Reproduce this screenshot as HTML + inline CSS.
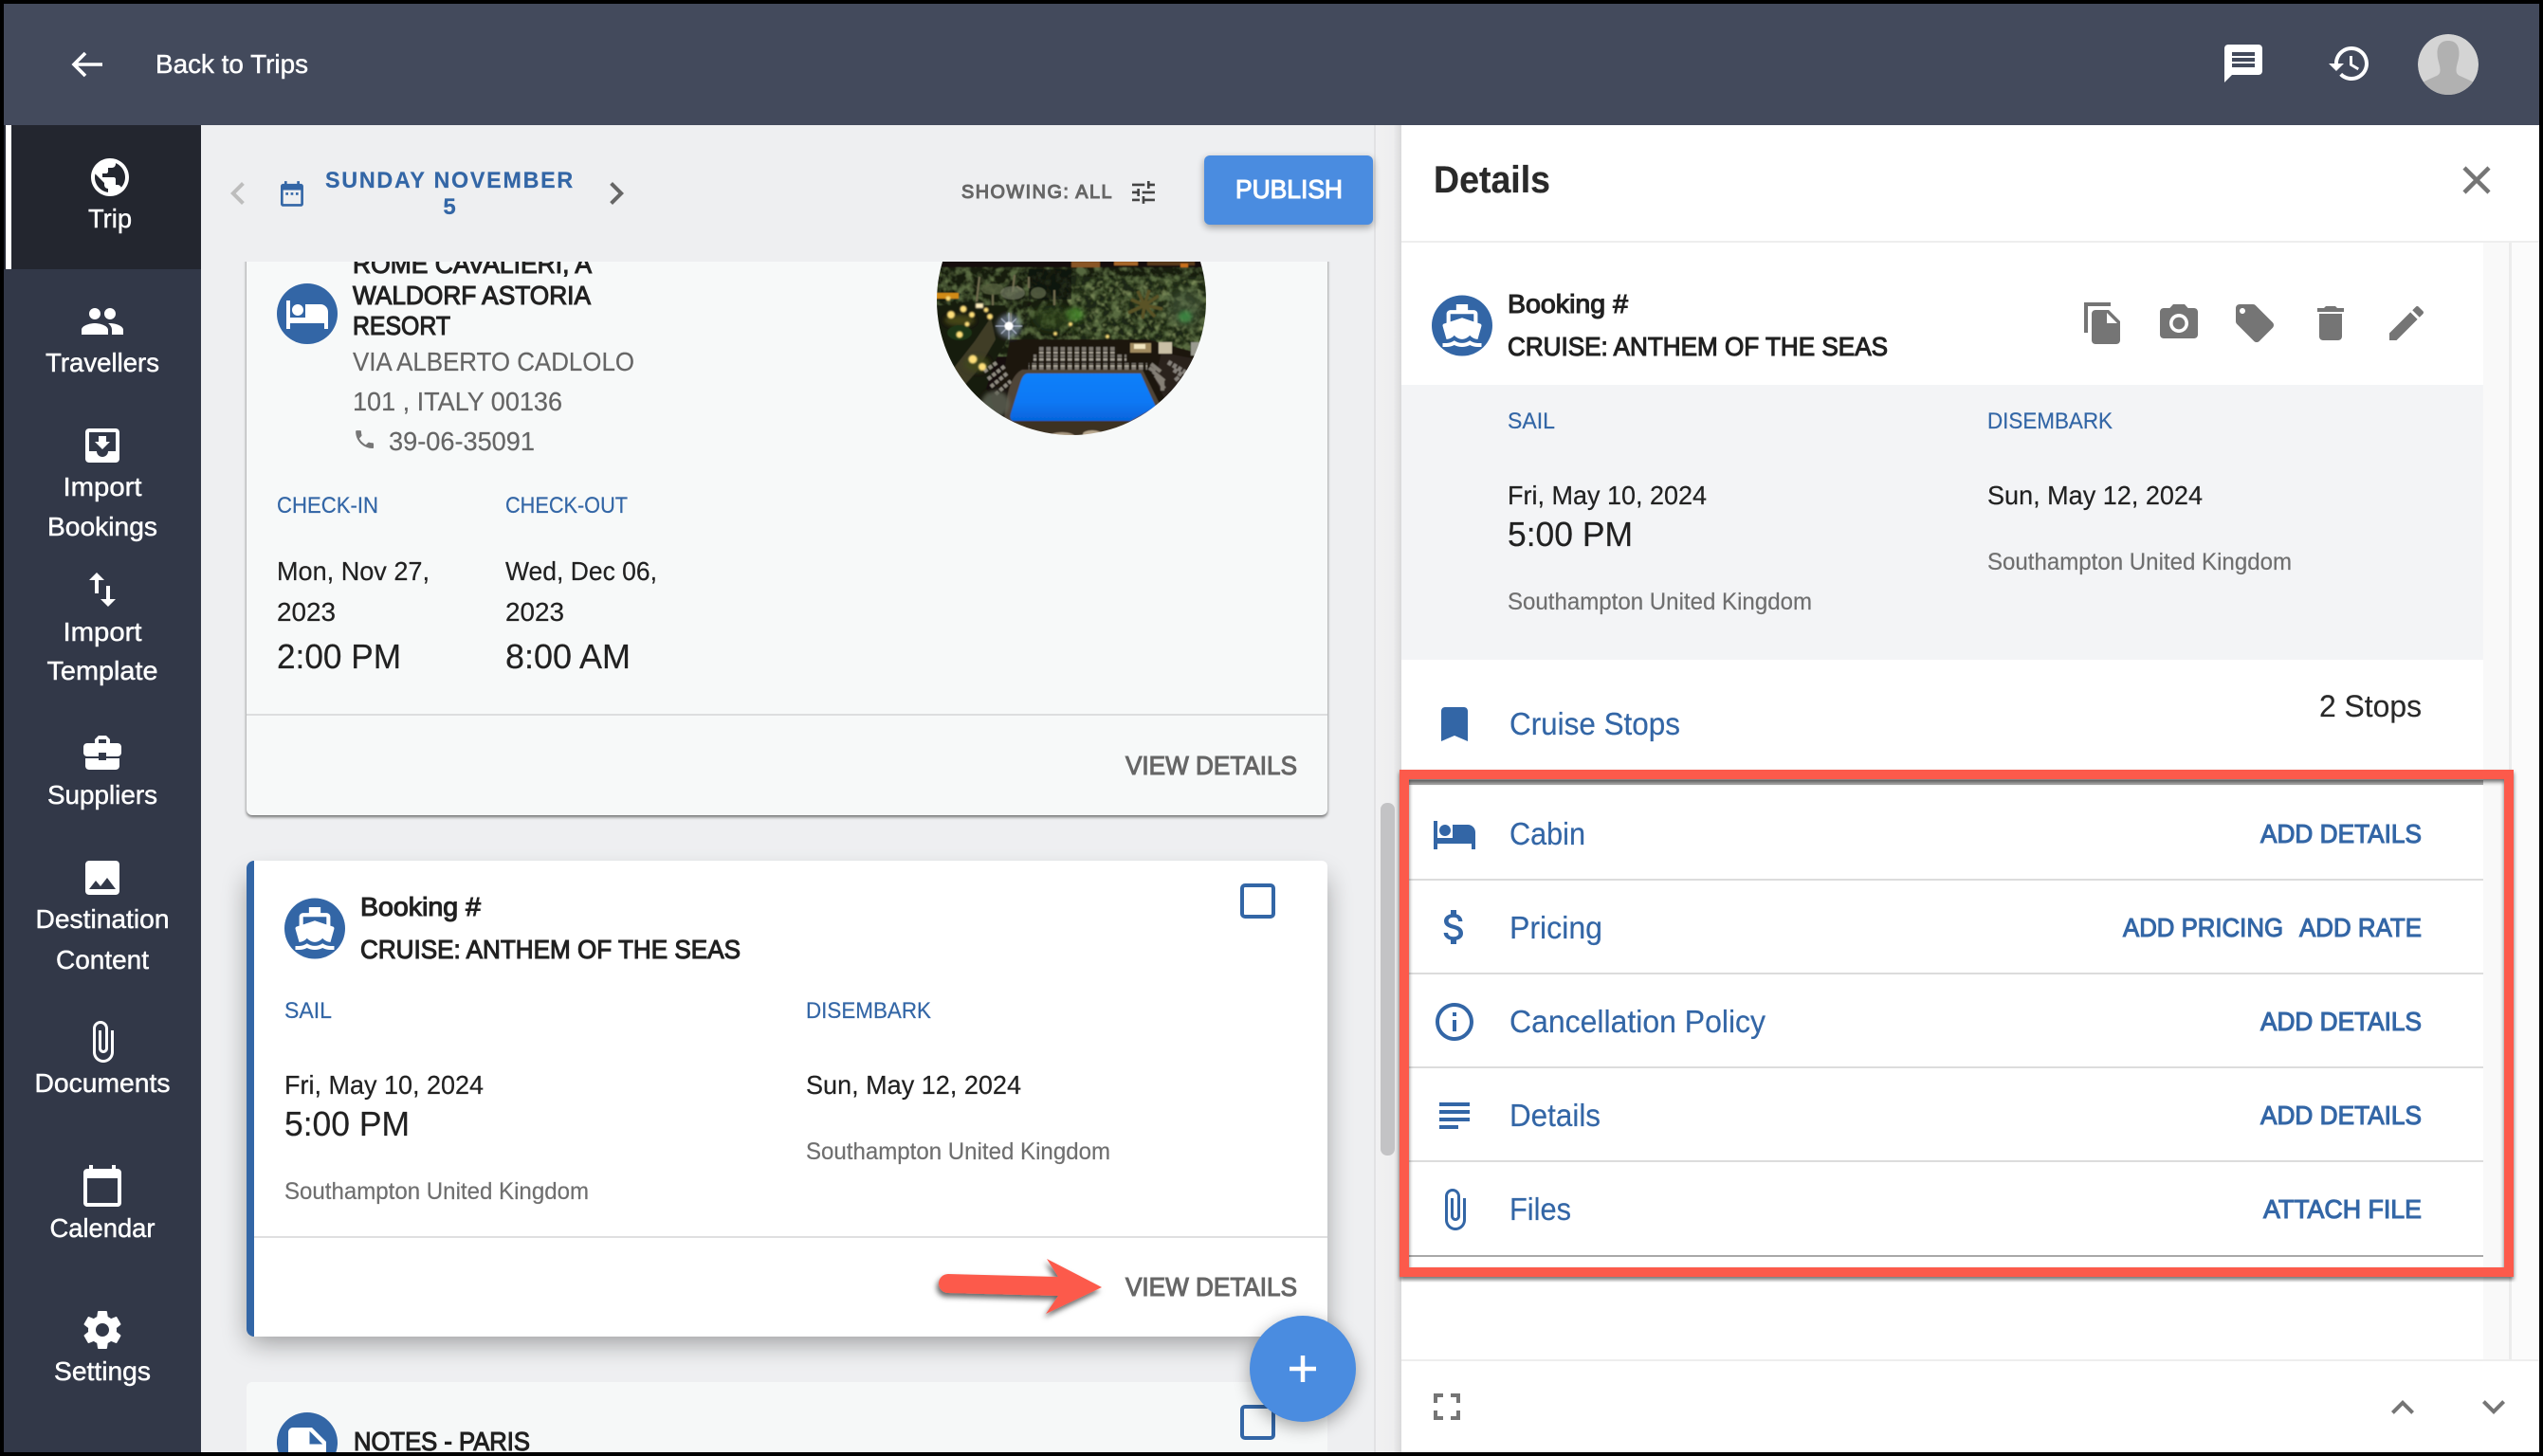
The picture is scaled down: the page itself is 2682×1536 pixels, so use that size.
<!DOCTYPE html>
<html lang="en"><head><meta charset="utf-8"><title>Trip details</title>
<style>
html,body{margin:0;padding:0;background:#000}
svg{display:block}
text{font-family:"Liberation Sans",Arial,sans-serif;fill:currentColor;white-space:pre;stroke:currentColor;stroke-width:.2px}
.k{color:#212121}.b{color:#3366a6}.g{color:#666}.w{color:#fff}.d{color:#2a2a2a}.h{color:#6f6f6f}
text.m{stroke-width:1.1px}
.nav text{stroke-width:.45px}
.s24{font-size:24px}.s25{font-size:25px}.s28{font-size:28px}.s33{font-size:33px}.s36{font-size:36px}
</style></head><body>
<svg xmlns="http://www.w3.org/2000/svg" width="2682" height="1536" viewBox="0 0 2682 1536">
<defs>
<path id="clip" d="M16.5 6v11.5c0 2.21-1.79 4-4 4s-4-1.79-4-4V5c0-1.38 1.12-2.5 2.5-2.5s2.5 1.12 2.5 2.5v10.5c0 .55-.45 1-1 1s-1-.45-1-1V6H10v9.5c0 1.38 1.12 2.5 2.5 2.5s2.5-1.12 2.5-2.5V5c0-2.21-1.79-4-4-4S7 2.79 7 5v12.5c0 3.04 2.46 5.5 5.5 5.5s5.5-2.46 5.5-5.5V6h-1.5z"/>
<path id="hotel" d="M7 13c1.66 0 3-1.34 3-3S8.66 7 7 7s-3 1.34-3 3 1.34 3 3 3zm12-6h-8v7H3V5H1v15h2v-3h18v3h2v-9c0-2.21-1.79-4-4-4z"/>
<path id="boat" d="M20 21c-1.39 0-2.78-.47-4-1.32-2.44 1.71-5.56 1.71-8 0C6.78 20.53 5.39 21 4 21H2v2h2c1.38 0 2.74-.35 4-.99 2.52 1.29 5.48 1.29 8 0 1.26.65 2.62.99 4 .99h2v-2h-2zM3.95 19H4c1.6 0 3.02-.88 4-2 .98 1.12 2.4 2 4 2s3.02-.88 4-2c.98 1.12 2.4 2 4 2h.05l1.89-6.68c.08-.26.06-.54-.06-.78s-.34-.42-.6-.5L20 10.62V6c0-1.1-.9-2-2-2h-3V1H9v3H6c-1.1 0-2 .9-2 2v4.62l-1.29.42c-.26.08-.48.26-.6.5s-.15.52-.06.78L3.95 19zM6 6h12v3.97L12 8 6 9.97V6z"/>
<filter id="cardsh" x="-10%" y="-20%" width="120%" height="150%"><feGaussianBlur stdDeviation="14"/></filter>
<filter id="smsh" x="-10%" y="-20%" width="120%" height="150%"><feGaussianBlur stdDeviation="4"/></filter>
<filter id="tinysh" x="-5%" y="-5%" width="110%" height="110%"><feGaussianBlur stdDeviation="1.500"/></filter>
<filter id="fabsh" x="-50%" y="-50%" width="200%" height="200%"><feGaussianBlur stdDeviation="9"/></filter>
<filter id="arrsh" x="-10%" y="-30%" width="120%" height="170%"><feDropShadow dx="-2" dy="4" stdDeviation="3" flood-color="#000" flood-opacity=".6"/></filter>
<filter id="redsh" x="-2%" y="-2%" width="104%" height="104%"><feDropShadow dx="0" dy="3" stdDeviation="2" flood-color="#000" flood-opacity=".55"/></filter>
<filter id="bl5"><feGaussianBlur stdDeviation="5"/></filter>
<filter id="bl2" x="-50%" y="-50%" width="200%" height="200%"><feGaussianBlur stdDeviation="2"/></filter>
<filter id="bl1" x="-50%" y="-50%" width="200%" height="200%"><feGaussianBlur stdDeviation=".8"/></filter>
<filter id="soft" x="0" y="0" width="100%" height="100%"><feGaussianBlur stdDeviation=".6"/></filter>
<filter id="leaf" x="0" y="0" width="100%" height="100%"><feTurbulence type="fractalNoise" baseFrequency=".11" numOctaves="3" seed="7"/><feColorMatrix values="0 0 0 0 .15  0 0 0 0 .22  0 0 0 0 .08  3.400 0 0 0 -1.400"/></filter>
<filter id="leaf2" x="0" y="0" width="100%" height="100%"><feTurbulence type="fractalNoise" baseFrequency=".16" numOctaves="2" seed="21"/><feColorMatrix values="0 0 0 0 .24  0 0 0 0 .30  0 0 0 0 .12  4 0 0 0 -2.100"/></filter>
<clipPath id="mainclip"><rect x="212" y="276" width="1237" height="1256"/></clipPath>
<clipPath id="poolc"><circle cx="1130" cy="317" r="142"/></clipPath>
<clipPath id="avc"><circle cx="2582" cy="68" r="32"/></clipPath>
<pattern id="chairs" width="7.500" height="7" patternUnits="userSpaceOnUse"><rect x="1" y="0" width="4.500" height="6" fill="#7c776e"/><rect x="1" y="0" width="4.500" height="2" fill="#a8a294"/></pattern>
<linearGradient id="side" x1="0" x2="1" y1="0" y2="0"><stop offset="0" stop-color="#f1f1f2"/><stop offset=".7" stop-color="#eeeeef"/><stop offset="1" stop-color="#d9d9da"/></linearGradient>
<linearGradient id="poolg" x1="0" x2="0" y1="0" y2="1"><stop offset="0" stop-color="#0a80fa"/><stop offset=".6" stop-color="#0a78f4"/><stop offset="1" stop-color="#0664dc"/></linearGradient>
</defs>

<rect width="2682" height="1536" fill="#000"/>
<rect x="212" y="132" width="1240" height="1400" fill="#eeeff1"/>
<rect x="1449" y="132" width="29" height="1400" fill="url(#side)"/>
<rect x="1449" y="132" width="2" height="1400" fill="#e2e2e4"/>
<rect x="1456" y="847" width="15" height="372" rx="7" fill="#c3c3c5"/>

<!-- cards -->
<g clip-path="url(#mainclip)">
  <rect x="260" y="270" width="1140" height="592" rx="6" fill="#000" opacity=".55" filter="url(#tinysh)"/>
  <rect x="260" y="270" width="1140" height="590" rx="6" fill="#f7f9f9"/>
  <rect x="260" y="753" width="1140" height="2" fill="#dddedf"/>
  <rect x="262" y="926" width="1136" height="490" rx="6" fill="#000" opacity=".36" filter="url(#cardsh)"/>
  <rect x="260" y="908" width="1140" height="502" rx="8" fill="#3366a6"/>
  <path d="M268 908H1394a6 6 0 0 1 6 6V1404a6 6 0 0 1-6 6H268z" fill="#fff"/>
  <rect x="268" y="1304" width="1132" height="2" fill="#dfdfe0"/>
  <rect x="260" y="1458" width="1140" height="90" rx="6" fill="#f6f8f8"/>
</g>

<!-- Card 1 content -->
<g clip-path="url(#mainclip)">
  <circle cx="324" cy="331" r="32" fill="#3366a6"/>
  <use href="#hotel" transform="translate(300 307) scale(2)" fill="#fff"/>
  <text x="372" y="288" class="s28 k m" textLength="252" lengthAdjust="spacingAndGlyphs">ROME CAVALIERI, A</text>
  <text x="372" y="321" class="s28 k m" textLength="251" lengthAdjust="spacingAndGlyphs">WALDORF ASTORIA</text>
  <text x="372" y="353" class="s28 k m" textLength="103" lengthAdjust="spacingAndGlyphs">RESORT</text>
  <text x="372" y="391" class="s28 g" textLength="297" lengthAdjust="spacingAndGlyphs">VIA ALBERTO CADLOLO</text>
  <text x="372" y="433" class="s28 g" textLength="221" lengthAdjust="spacingAndGlyphs">101 , ITALY 00136</text>
  <path transform="translate(372 451) scale(1.05)" fill="#777" d="M6.62 10.79c1.44 2.83 3.76 5.14 6.59 6.59l2.2-2.2c.27-.27.67-.36 1.02-.24 1.12.37 2.33.57 3.57.57.55 0 1 .45 1 1V20c0 .55-.45 1-1 1-9.39 0-17-7.61-17-17 0-.55.45-1 1-1h3.5c.55 0 1 .45 1 1 0 1.25.2 2.45.57 3.57.11.35.03.74-.25 1.02l-2.2 2.2z"/>
  <text x="410" y="475" class="s28 g" textLength="154" lengthAdjust="spacingAndGlyphs">39-06-35091</text>
  <text x="292" y="541" class="s24 b" textLength="107" lengthAdjust="spacingAndGlyphs">CHECK-IN</text>
  <text x="533" y="541" class="s24 b" textLength="129" lengthAdjust="spacingAndGlyphs">CHECK-OUT</text>
  <text x="292" y="612" class="s28 k" textLength="161" lengthAdjust="spacingAndGlyphs">Mon, Nov 27,</text>
  <text x="292" y="655" class="s28 k" textLength="62" lengthAdjust="spacingAndGlyphs">2023</text>
  <text x="533" y="612" class="s28 k" textLength="160" lengthAdjust="spacingAndGlyphs">Wed, Dec 06,</text>
  <text x="533" y="655" class="s28 k" textLength="62" lengthAdjust="spacingAndGlyphs">2023</text>
  <text x="292" y="705" class="s36 k" textLength="131" lengthAdjust="spacingAndGlyphs">2:00 PM</text>
  <text x="533" y="705" class="s36 k" textLength="132" lengthAdjust="spacingAndGlyphs">8:00 AM</text>
  <text x="1187" y="817" class="s28 g m" textLength="181" lengthAdjust="spacingAndGlyphs">VIEW DETAILS</text>

  <!-- pool image -->
  <g clip-path="url(#poolc)">
   <g filter="url(#soft)">
    <rect x="985" y="170" width="292" height="292" fill="#120f0a"/>
    <!-- city lights on top -->
    <rect x="1130" y="276" width="30" height="13" fill="#8a5626"/>
    <rect x="1175" y="276" width="25" height="4" fill="#a8682a"/>
    <rect x="1210" y="276" width="50" height="4" fill="#5a3a1c"/>
    <rect x="1245" y="278" width="8" height="4" fill="#c8701c"/>
    <!-- foliage -->
    <rect x="985" y="282" width="292" height="94" fill="#141a0c"/>
    <rect x="1130" y="292" width="150" height="80" fill="#1d2812"/>
    <rect x="985" y="282" width="292" height="94" filter="url(#leaf)" opacity=".75"/>
    <rect x="1125" y="296" width="155" height="74" filter="url(#leaf2)" opacity=".7"/>
    <rect x="985" y="282" width="80" height="28" filter="url(#leaf2)" opacity=".3"/>
    <rect x="1085" y="284" width="45" height="32" fill="#0c0f08" opacity=".7"/>
    <ellipse cx="1250" cy="325" rx="19" ry="20" fill="#4a5c40" opacity=".55" filter="url(#bl5)"/>
    <ellipse cx="1250" cy="334" rx="7" ry="6" fill="#3c9a4a" opacity=".7" filter="url(#bl2)"/>
    <ellipse cx="1133" cy="332" rx="10" ry="7" fill="#4d9a30" opacity=".7" filter="url(#bl2)"/>
    <ellipse cx="1110" cy="336" rx="22" ry="14" fill="#33491f" opacity=".6" filter="url(#bl5)"/>
    <!-- palm -->
    <path d="M1207 322L1190 330M1207 322L1193 316M1207 322L1200 307M1207 322L1212 306M1207 322L1222 312M1207 322L1226 326M1207 322L1218 334M1207 322L1205 336" stroke="#5a5228" stroke-width="3.500" fill="none"/>
    <!-- trunks / left palms -->
    <path d="M1047 310V330M1033 292L1030 318M1070 290L1068 308M1085 292V304M1112 306V322M1066 330V344M1078 306L1072 302" stroke="#6e6a4e" stroke-width="2.200" fill="none"/>
    <ellipse cx="1047" cy="305" rx="12" ry="6" fill="#56603e" opacity=".8"/>
    <ellipse cx="1068" cy="309" rx="13" ry="7" fill="#737a62" opacity=".7"/>
    <ellipse cx="1095" cy="309" rx="8" ry="6" fill="#666f50" opacity=".7"/>
    <!-- left garden & path -->
    <path d="M985 322L1060 322 1065 352 1050 380 1040 410 1070 450 985 470Z" fill="#181a0e"/>
    <path d="M1045 335L1028 360 1006 388 1016 408 1030 392 1050 358Z" fill="#4a452f" opacity=".8"/>
    <ellipse cx="1012" cy="338" rx="16" ry="6" fill="#50501c" opacity=".8" filter="url(#bl2)"/>
    <ellipse cx="1012" cy="351" rx="13" ry="8" fill="#1a3412"/>
    <ellipse cx="1030" cy="384" rx="14" ry="9" fill="#40461c" opacity=".8" filter="url(#bl2)"/>
    <rect x="985" y="309" width="26" height="6" fill="#d08a18"/>
    <!-- deck -->
    <path d="M1065 358L1210 358 1262 372 1282 392 1282 470 1130 470 1060 470 1045 420 1060 385Z" fill="#1b1611"/>
    <path d="M1225 372L1258 378 1272 396 1232 428 1218 400Z" fill="#2c221a"/>
    <!-- chairs -->
    <rect x="1093" y="366" width="84" height="7" fill="url(#chairs)"/>
    <rect x="1090" y="374" width="98" height="7" fill="url(#chairs)"/>
    <rect x="1085" y="383" width="125" height="7" fill="url(#chairs)"/>
    <path d="M1042 400L1060 386M1045 408L1062 394M1050 416L1066 402M1038 392L1052 382" stroke="#8f8a80" stroke-width="4" fill="none" stroke-dasharray="4 2"/>
    <path d="M1212 388L1218 392M1218 396L1224 400M1214 384L1224 392M1216 392L1228 402M1220 398L1228 410M1226 402L1226 412" stroke="#8f8a80" stroke-width="4" fill="none" opacity=".9"/>
    <path d="M1232 382L1252 394M1238 390L1256 402M1240 398L1250 410" stroke="#85807a" stroke-width="5" fill="none" stroke-dasharray="4 2"/>
    <!-- cabanas -->
    <rect x="1192" y="362" width="22" height="10" fill="#a08a5e"/>
    <rect x="1196" y="363" width="12" height="5" fill="#f2e6c0"/>
    <rect x="1222" y="361" width="14" height="12" fill="#c9c0a6"/>
    <rect x="1256" y="361" width="10" height="14" fill="#9a9a90"/>
    <!-- pool -->
    <path d="M1078 390H1205L1224 428 1224 450H1058L1062 420Q1066 396 1078 390Z" fill="#4f4439"/>
    <path d="M1084 394H1203L1219 429 1192 444H1070Q1064 444 1066 436L1076 404Q1079 394 1084 394Z" fill="url(#poolg)"/>
    <rect x="1040" y="444" width="190" height="22" fill="#3e3024"/>
    <ellipse cx="1050" cy="426" rx="15" ry="14" fill="#5e6454" opacity=".8" filter="url(#bl2)"/>
    <ellipse cx="1120" cy="461" rx="14" ry="5" fill="#a89880"/>
    <ellipse cx="1152" cy="458" rx="10" ry="4" fill="#b8a890"/>
    <!-- lights -->
    <g filter="url(#bl1)" fill="#ffe07a">
      <rect x="1029" y="320" width="8" height="5" fill="#fff0c0"/>
      <circle cx="1016" cy="326" r="3.500"/><circle cx="1003" cy="332" r="4"/><circle cx="1025" cy="332" r="3"/>
      <circle cx="1020" cy="342" r="2.500"/><circle cx="1044" cy="334" r="3"/><circle cx="1040" cy="327" r="2.500"/>
      <circle cx="1012" cy="353" r="3.500"/><circle cx="1026" cy="379" r="4.500"/><circle cx="1036" cy="387" r="4"/>
      <circle cx="1113" cy="352" r="2"/><circle cx="1129" cy="342" r="2"/><circle cx="1168" cy="355" r="2"/>
      <circle cx="1000" cy="315" r="2.500"/>
    </g>
    <circle cx="1064" cy="344" r="13" fill="#bcd2ff" opacity=".4" filter="url(#bl2)"/>
    <path d="M1064 330V358M1050 344H1078M1056 336L1072 352M1072 336L1056 352" stroke="#dfe8ff" stroke-width="1" opacity=".7"/>
    <circle cx="1064" cy="344" r="4.500" fill="#fff"/>
   </g>
  </g>

  <!-- Card 2 content -->
  <circle cx="332" cy="979.500" r="32" fill="#3366a6"/>
  <use href="#boat" transform="translate(307.400 954.900) scale(2.05)" fill="#fff"/>
  <text x="380" y="966" class="s28 k m" textLength="127" lengthAdjust="spacingAndGlyphs">Booking #</text>
  <text x="380" y="1011" class="s28 k m" textLength="401" lengthAdjust="spacingAndGlyphs">CRUISE: ANTHEM OF THE SEAS</text>
  <rect x="1310" y="934" width="33" height="33" rx="3" fill="none" stroke="#3366a6" stroke-width="4"/>
  <text x="300" y="1074" class="s24 b" textLength="50" lengthAdjust="spacingAndGlyphs">SAIL</text>
  <text x="850" y="1074" class="s24 b" textLength="132" lengthAdjust="spacingAndGlyphs">DISEMBARK</text>
  <text x="300" y="1154" class="s28 k" textLength="210" lengthAdjust="spacingAndGlyphs">Fri, May 10, 2024</text>
  <text x="300" y="1198" class="s36 k" textLength="132" lengthAdjust="spacingAndGlyphs">5:00 PM</text>
  <text x="300" y="1265" class="s25 h" textLength="321" lengthAdjust="spacingAndGlyphs">Southampton United Kingdom</text>
  <text x="850" y="1154" class="s28 k" textLength="227" lengthAdjust="spacingAndGlyphs">Sun, May 12, 2024</text>
  <text x="850" y="1223" class="s25 h" textLength="321" lengthAdjust="spacingAndGlyphs">Southampton United Kingdom</text>
  <text x="1187" y="1367" class="s28 g m" textLength="181" lengthAdjust="spacingAndGlyphs">VIEW DETAILS</text>
  <path d="M1000 1344L1116 1347 1104 1328 1162 1358 1103 1386 1116 1367 1000 1364a10 10 0 0 1 0-20Z" fill="#fc5a4b" filter="url(#arrsh)"/>

  <!-- Card 3 content -->
  <circle cx="324" cy="1522" r="32" fill="#3366a6"/>
  <path transform="translate(294 1501) scale(2.5)" fill="#fff" d="M6 2c-1.1 0-1.99.9-1.99 2L4 20c0 1.1.89 2 1.99 2H18c1.1 0 2-.9 2-2V8l-6-6H6zm7 7V3.5L18.5 9H13z"/>
  <text x="373" y="1530" class="s28 k m" textLength="186" lengthAdjust="spacingAndGlyphs">NOTES - PARIS</text>
  <rect x="1310" y="1484" width="33" height="33" rx="3" fill="none" stroke="#3366a6" stroke-width="4"/>
</g>

<!-- toolbar -->
<path transform="translate(227 180) scale(2)" fill="#bdbdbd" d="M15.41 7.41L14 6l-6 6 6 6 1.41-1.41L10.83 12z"/>
<path transform="translate(292 188.5) scale(1.33)" fill="#3366a6" d="M9 11H7v2h2v-2zm4 0h-2v2h2v-2zm4 0h-2v2h2v-2zm2-7h-1V2h-2v2H8V2H6v2H5c-1.11 0-1.99.9-1.99 2L3 20c0 1.1.89 2 2 2h14c1.1 0 2-.9 2-2V6c0-1.1-.9-2-2-2h-3.170z M19 20H5V9h14v11z" style="display:none"/>
<path transform="translate(292 188.5) scale(1.33)" fill="#3366a6" d="M9 11H7v2h2v-2zm4 0h-2v2h2v-2zm4 0h-2v2h2v-2zm2-7h-1V2h-2v2H8V2H6v2H5c-1.11 0-1.99.9-1.99 2L3 20c0 1.1.89 2 2 2h14c1.1 0 2-.9 2-2V6c0-1.1-.9-2-2-2zm0 16H5V9h14v11z"/>
<text x="343" y="198" class="s24 b" font-weight="700" letter-spacing="1.800" textLength="263" lengthAdjust="spacingAndGlyphs">SUNDAY NOVEMBER</text>
<text x="474" y="226" class="s24 b" font-weight="700" text-anchor="middle">5</text>
<path transform="translate(626 180) scale(2)" fill="#666" d="M10 6L8.59 7.41 13.17 12l-4.58 4.59L10 18l6-6z"/>
<text x="1014" y="209" font-size="20" class="g m" letter-spacing="1.500" textLength="160" lengthAdjust="spacingAndGlyphs">SHOWING: ALL</text>
<path transform="translate(1190 187) scale(1.33)" fill="#444" d="M3 17v2h6v-2H3zM3 5v2h10V5H3zm10 16v-2h8v-2h-8v-2h-2v6h2zM7 9v2H3v2h4v2h2V9H7zm14 4v-2H11v2h10zm-6-4h2V7h4V5h-4V3h-2v6z"/>
<rect x="1270" y="167" width="178" height="73" rx="6" fill="#000" opacity=".35" filter="url(#smsh)"/>
<rect x="1270" y="164" width="178" height="73" rx="6" fill="#4a8ce0"/>
<text x="1303" y="209" class="s28 w m" textLength="113" lengthAdjust="spacingAndGlyphs">PUBLISH</text>

<!-- FAB -->
<circle cx="1374" cy="1449" r="56" fill="#000" opacity=".35" filter="url(#fabsh)"/>
<circle cx="1374" cy="1444" r="56" fill="#4a8ce0"/>
<path d="M1360 1444h28M1374 1430v28" stroke="#fff" stroke-width="4.5" fill="none"/>

<!-- header -->
<rect x="4" y="4" width="2674" height="128" fill="#434a5c"/>
<path d="M108 68H78M90 56L78 68 90 80" fill="none" stroke="#fff" stroke-width="3.6"/>
<text x="164" y="77" class="s28 w" style="stroke-width:.45px" textLength="161" lengthAdjust="spacingAndGlyphs">Back to Trips</text>
<path transform="translate(2342 43) scale(2)" fill="#fff" d="M20 2H4c-1.1 0-1.99.9-1.99 2L2 22l4-4h14c1.1 0 2-.9 2-2V4c0-1.1-.9-2-2-2zm-2 12H6v-2h12v2zm0-3H6V9h12v2zm0-3H6V6h12v2z"/>
<path transform="translate(2454 43) scale(2)" fill="#fff" d="M13 3c-4.97 0-9 4.03-9 9H1l3.89 3.89.07.14L9 12H6c0-3.87 3.13-7 7-7s7 3.13 7 7-3.13 7-7 7c-1.93 0-3.68-.79-4.94-2.06l-1.42 1.42C8.27 19.99 10.51 21 13 21c4.97 0 9-4.03 9-9s-4.03-9-9-9zm-1 5v5l4.28 2.54.72-1.21-3.5-2.08V8H12z"/>
<g clip-path="url(#avc)">
  <circle cx="2582" cy="68" r="32" fill="#d4d4d4"/>
  <path d="M2582 43c-8 0-11.500 5-11.500 13 0 8 3 12 3 18 0 4-2 5.500-6 7l-12 5.500V102h53V86.500l-12-5.500c-4-1.500-6-3-6-7 0-6 3-10 3-18 0-8-3.500-13-11.500-13z" fill="#b1b1b1"/>
</g>

<!-- sidebar -->
<rect x="4" y="132" width="208" height="1400" fill="#323848"/>
<rect x="4" y="132" width="208" height="152" fill="#23262f"/>
<rect x="6" y="132" width="6" height="152" fill="#fff"/>
<g fill="#fff">
<path transform="translate(92 163) scale(2)" d="M12 2C6.48 2 2 6.48 2 12s4.48 10 10 10 10-4.48 10-10S17.52 2 12 2zm-1 17.930c-3.950-.49-7-3.850-7-7.930 0-.62.08-1.210.21-1.790L9 15v1c0 1.100.9 2 2 2v1.930zm6.900-2.540c-.26-.81-1-1.390-1.900-1.390h-1v-3c0-.55-.45-1-1-1H8v-2h2c.55 0 1-.45 1-1V7h2c1.100 0 2-.9 2-2v-.41c2.930 1.190 5 4.060 5 7.410 0 2.080-.8 3.970-2.100 5.390z"/>
<path transform="translate(84 315) scale(2)" d="M16 11c1.660 0 2.990-1.340 2.990-3S17.660 5 16 5c-1.660 0-3 1.340-3 3s1.340 3 3 3zm-8 0c1.660 0 2.990-1.340 2.990-3S9.660 5 8 5C6.340 5 5 6.340 5 8s1.340 3 3 3zm0 2c-2.330 0-7 1.170-7 3.500V19h14v-2.500c0-2.330-4.670-3.500-7-3.500zm8 0c-.29 0-.62.02-.97.05 1.160.84 1.970 1.970 1.970 3.450V19h6v-2.500c0-2.330-4.670-3.500-7-3.500z"/>
<path transform="translate(84 446) scale(2)" d="M19 3H4.990c-1.110 0-1.980.89-1.980 2L3 19c0 1.100.88 2 1.990 2H19c1.100 0 2-.9 2-2V5c0-1.110-.9-2-2-2zm0 12h-4c0 1.660-1.350 3-3 3s-3-1.340-3-3H4.990V5H19v10zm-3-5h-2V7h-4v3H8l4 4 4-4z"/>
<path transform="translate(84 598) scale(2)" d="M9 3L5 6.990h3V14h2V6.990h3L9 3zm7 14.010V10h-2v7.010h-3L15 21l4-3.990h-3z"/>
<path transform="translate(84 770) scale(2)" d="M10 16v-1H3.010L3 19c0 1.110.89 2 2 2h14c1.110 0 2-.89 2-2v-4h-7v1h-4zm10-9h-4.010V5l-2-2h-4l-2 2v2H4c-1.100 0-2 .9-2 2v3c0 1.110.89 2 2 2h6v-2h4v2h6c1.100 0 2-.9 2-2V9c0-1.100-.9-2-2-2zm-6 0h-4V5h4v2z"/>
<path transform="translate(84 902) scale(2)" d="M21 19V5c0-1.100-.9-2-2-2H5c-1.100 0-2 .9-2 2v14c0 1.100.9 2 2 2h14c1.100 0 2-.9 2-2zM8.500 13.500l2.500 3.010L14.500 12l4.500 6H5l3.500-4.500z"/>
<use href="#clip" transform="translate(84 1075) scale(2)"/>
<path transform="translate(84 1227) scale(2)" d="M20 3h-1V1h-2v2H7V1H5v2H4c-1.100 0-2 .9-2 2v16c0 1.100.9 2 2 2h16c1.100 0 2-.9 2-2V5c0-1.100-.9-2-2-2zm0 18H4V8h16v13z"/>
<path transform="translate(84 1379) scale(2)" d="M19.430 12.980c.04-.32.07-.64.07-.98s-.03-.66-.07-.98l2.110-1.650c.19-.15.24-.42.12-.64l-2-3.460c-.12-.22-.39-.3-.61-.22l-2.490 1c-.52-.4-1.080-.73-1.690-.98l-.38-2.650C14.460 2.180 14.250 2 14 2h-4c-.25 0-.46.18-.49.42l-.38 2.650c-.61.25-1.170.59-1.690.98l-2.490-1c-.23-.09-.49 0-.61.22l-2 3.460c-.13.22-.07.49.12.64l2.110 1.650c-.04.32-.07.65-.07.98s.03.66.07.98l-2.110 1.650c-.19.15-.24.42-.12.64l2 3.460c.12.22.39.3.61.22l2.490-1c.52.4 1.080.73 1.690.98l.38 2.650c.03.24.24.42.49.42h4c.25 0 .46-.18.49-.42l.38-2.650c.61-.25 1.170-.59 1.690-.98l2.490 1c.23.09.49 0 .61-.22l2-3.460c.12-.22.07-.49-.12-.64l-2.110-1.650zM12 15.500c-1.930 0-3.500-1.570-3.500-3.500s1.570-3.500 3.500-3.500 3.500 1.570 3.500 3.500-1.570 3.500-3.500 3.500z"/>
</g>
<g class="s28 w nav" text-anchor="middle">
<text x="116" y="240" textLength="46" lengthAdjust="spacingAndGlyphs">Trip</text>
<text x="108" y="392" textLength="120" lengthAdjust="spacingAndGlyphs">Travellers</text>
<text x="108" y="523" textLength="83" lengthAdjust="spacingAndGlyphs">Import</text>
<text x="108" y="565" textLength="116" lengthAdjust="spacingAndGlyphs">Bookings</text>
<text x="108" y="676" textLength="83" lengthAdjust="spacingAndGlyphs">Import</text>
<text x="108" y="717" textLength="117" lengthAdjust="spacingAndGlyphs">Template</text>
<text x="108" y="848" textLength="116" lengthAdjust="spacingAndGlyphs">Suppliers</text>
<text x="108" y="979" textLength="141" lengthAdjust="spacingAndGlyphs">Destination</text>
<text x="108" y="1022" textLength="98" lengthAdjust="spacingAndGlyphs">Content</text>
<text x="108" y="1152" textLength="143" lengthAdjust="spacingAndGlyphs">Documents</text>
<text x="108" y="1305" textLength="111" lengthAdjust="spacingAndGlyphs">Calendar</text>
<text x="108" y="1456" textLength="102" lengthAdjust="spacingAndGlyphs">Settings</text>
</g>

<!-- details panel -->
<rect x="1478" y="132" width="1200" height="1400" fill="#fff"/>
<rect x="2619" y="256" width="27" height="1179" fill="#f9f9f9"/>
<rect x="2646" y="256" width="3" height="1179" fill="#ececec"/>
<rect x="2649" y="256" width="29" height="1179" fill="#fbfbfb"/>
<rect x="1478" y="254" width="1200" height="2" fill="#eeeeee"/>
<text x="1512" y="203" font-size="40" class="d" font-weight="700" textLength="123" lengthAdjust="spacingAndGlyphs">Details</text>
<path d="M2599 177L2625 203M2625 177L2599 203" stroke="#757575" stroke-width="4.500" fill="none"/>

<circle cx="1542" cy="343.500" r="32" fill="#3366a6"/>
<use href="#boat" transform="translate(1517.400 318.900) scale(2.05)" fill="#fff"/>
<text x="1590" y="330" class="s28 k m" textLength="127" lengthAdjust="spacingAndGlyphs">Booking #</text>
<text x="1590" y="375" class="s28 k m" textLength="401" lengthAdjust="spacingAndGlyphs">CRUISE: ANTHEM OF THE SEAS</text>
<g fill="#757575">
<path transform="translate(2194 317) scale(2)" d="M16 1H2v16h2V3h12V1zm-1 4l6 6v10c0 1.100-.9 2-2 2H7.990C6.890 23 6 22.100 6 21l.01-14c0-1.100.89-2 1.990-2h7zm-1 7h5.500L14 6.500V12z"/>
<path transform="translate(2274 317) scale(2)" d="M9 2L7.170 4H4c-1.100 0-2 .9-2 2v12c0 1.100.9 2 2 2h16c1.100 0 2-.9 2-2V6c0-1.100-.9-2-2-2h-3.170L15 2H9zm3 15c-2.760 0-5-2.240-5-5s2.240-5 5-5 5 2.240 5 5-2.240 5-5 5z"/><circle cx="2298" cy="341" r="6.400"/>
<path transform="translate(2354 317) scale(2)" d="M21.410 11.580l-9-9C12.050 2.220 11.550 2 11 2H4c-1.100 0-2 .9-2 2v7c0 .55.22 1.050.59 1.420l9 9c.36.36.86.58 1.410.58.55 0 1.050-.22 1.410-.59l7-7c.37-.36.59-.86.59-1.410 0-.55-.23-1.060-.59-1.420zM5.500 7C4.670 7 4 6.330 4 5.500S4.670 4 5.500 4 7 4.670 7 5.500 6.330 7 5.500 7z"/>
<path transform="translate(2434 317) scale(2)" d="M6 19c0 1.100.9 2 2 2h8c1.100 0 2-.9 2-2V7H6v12zM19 4h-3.500l-1-1h-5l-1 1H5v2h14V4z"/>
<path transform="translate(2514 317) scale(2)" d="M3 17.250V21h3.750L17.810 9.940l-3.750-3.750L3 17.250zM20.710 7.040c.39-.39.39-1.020 0-1.410l-2.340-2.340c-.39-.39-1.020-.39-1.410 0l-1.830 1.830 3.750 3.750 1.830-1.830z"/>
</g>
<rect x="1478" y="406" width="1141" height="290" fill="#f3f4f6"/>
<text x="1590" y="452" class="s24 b" textLength="50" lengthAdjust="spacingAndGlyphs">SAIL</text>
<text x="2096" y="452" class="s24 b" textLength="132" lengthAdjust="spacingAndGlyphs">DISEMBARK</text>
<text x="1590" y="532" class="s28 k" textLength="210" lengthAdjust="spacingAndGlyphs">Fri, May 10, 2024</text>
<text x="1590" y="576" class="s36 k" textLength="132" lengthAdjust="spacingAndGlyphs">5:00 PM</text>
<text x="1590" y="643" class="s25 h" textLength="321" lengthAdjust="spacingAndGlyphs">Southampton United Kingdom</text>
<text x="2096" y="532" class="s28 k" textLength="227" lengthAdjust="spacingAndGlyphs">Sun, May 12, 2024</text>
<text x="2096" y="601" class="s25 h" textLength="321" lengthAdjust="spacingAndGlyphs">Southampton United Kingdom</text>

<path transform="translate(1510 740) scale(2)" fill="#3366a6" d="M17 3H7c-1.100 0-1.990.9-1.990 2L5 21l7-3 7 3V5c0-1.100-.9-2-2-2z"/>
<text x="1592" y="775" class="s33 b" textLength="180" lengthAdjust="spacingAndGlyphs">Cruise Stops</text>
<text x="2446" y="756" font-size="32" class="d" textLength="108" lengthAdjust="spacingAndGlyphs">2 Stops</text>

<!-- red highlight rows -->
<g fill="#dcdcdc">
<rect x="1486" y="927" width="1133" height="2"/><rect x="1486" y="1026" width="1133" height="2"/><rect x="1486" y="1125" width="1133" height="2"/><rect x="1486" y="1224" width="1133" height="2"/>
</g>
<rect x="1486" y="823" width="1133" height="5" fill="#9a9a9a" opacity=".8"/>
<rect x="1486" y="1324" width="1133" height="2" fill="#a8a8a8"/>
<g fill="#3366a6">
<use href="#hotel" transform="translate(1510 856) scale(2)"/>
<path transform="translate(1510 954) scale(2)" d="M11.800 10.900c-2.270-.59-3-1.200-3-2.150 0-1.090 1.010-1.850 2.700-1.850 1.780 0 2.440.85 2.500 2.100h2.210c-.07-1.720-1.120-3.300-3.210-3.810V3h-3v2.160c-1.940.42-3.500 1.680-3.500 3.610 0 2.310 1.910 3.460 4.700 4.130 2.500.6 3 1.480 3 2.410 0 .69-.49 1.790-2.700 1.790-2.060 0-2.870-.92-2.980-2.100h-2.200c.12 2.190 1.760 3.420 3.680 3.830V21h3v-2.150c1.950-.37 3.500-1.500 3.500-3.550 0-2.840-2.430-3.810-4.700-4.400z"/>
<path transform="translate(1510 1054) scale(2)" d="M11 17h2v-6h-2v6zm1-15C6.480 2 2 6.480 2 12s4.480 10 10 10 10-4.480 10-10S17.520 2 12 2zm0 18c-4.410 0-8-3.590-8-8s3.590-8 8-8 8 3.590 8 8-3.590 8-8 8zM11 9h2V7h-2v2z"/>
<path transform="translate(1510 1153) scale(2)" d="M14 17H4v2h10v-2zm6-8H4v2h16V9zM4 15h16v-2H4v2zM4 5v2h16V5H4z"/>
<use href="#clip" transform="translate(1510 1252) scale(2)"/>
</g>
<text x="1592" y="891" class="s33 b" textLength="80" lengthAdjust="spacingAndGlyphs">Cabin</text>
<text x="1592" y="990" class="s33 b" textLength="98" lengthAdjust="spacingAndGlyphs">Pricing</text>
<text x="1592" y="1089" class="s33 b" textLength="270" lengthAdjust="spacingAndGlyphs">Cancellation Policy</text>
<text x="1592" y="1188" class="s33 b" textLength="96" lengthAdjust="spacingAndGlyphs">Details</text>
<text x="1592" y="1287" class="s33 b" textLength="65" lengthAdjust="spacingAndGlyphs">Files</text>
<text x="2384" y="889" class="s28 b m" textLength="170" lengthAdjust="spacingAndGlyphs">ADD DETAILS</text>
<text x="2239" y="988" class="s28 b m" textLength="169" lengthAdjust="spacingAndGlyphs">ADD PRICING</text>
<text x="2425" y="988" class="s28 b m" textLength="129" lengthAdjust="spacingAndGlyphs">ADD RATE</text>
<text x="2384" y="1087" class="s28 b m" textLength="170" lengthAdjust="spacingAndGlyphs">ADD DETAILS</text>
<text x="2384" y="1186" class="s28 b m" textLength="170" lengthAdjust="spacingAndGlyphs">ADD DETAILS</text>
<text x="2387" y="1285" class="s28 b m" textLength="167" lengthAdjust="spacingAndGlyphs">ATTACH FILE</text>
<rect x="1481" y="817" width="1165" height="525" fill="none" stroke="#fc5a4b" stroke-width="10" filter="url(#redsh)"/>

<!-- details footer -->
<rect x="1478" y="1435" width="1200" height="97" fill="#fff"/>
<rect x="1478" y="1434" width="1200" height="2" fill="#eeeeee"/>
<path transform="translate(1502 1460) scale(2)" fill="#757575" d="M7 14H5v5h5v-2H7v-3zm-2-4h2V7h3V5H5v5zm12 7h-3v2h5v-5h-2v3zM14 5v2h3v3h2V5h-5z"/>
<path transform="translate(2510 1461) scale(2)" fill="#757575" d="M12 8l-6 6 1.410 1.410L12 10.830l4.590 4.580L18 14z"/>
<path transform="translate(2606 1460) scale(2)" fill="#757575" d="M16.590 8.590L12 13.170 7.410 8.590 6 10l6 6 6-6z"/>
<!-- frame -->
<path d="M0 0H2682V1536H0ZM4 4V1532H2678V4Z" fill="#000" fill-rule="evenodd"/>
</svg>
</body></html>
